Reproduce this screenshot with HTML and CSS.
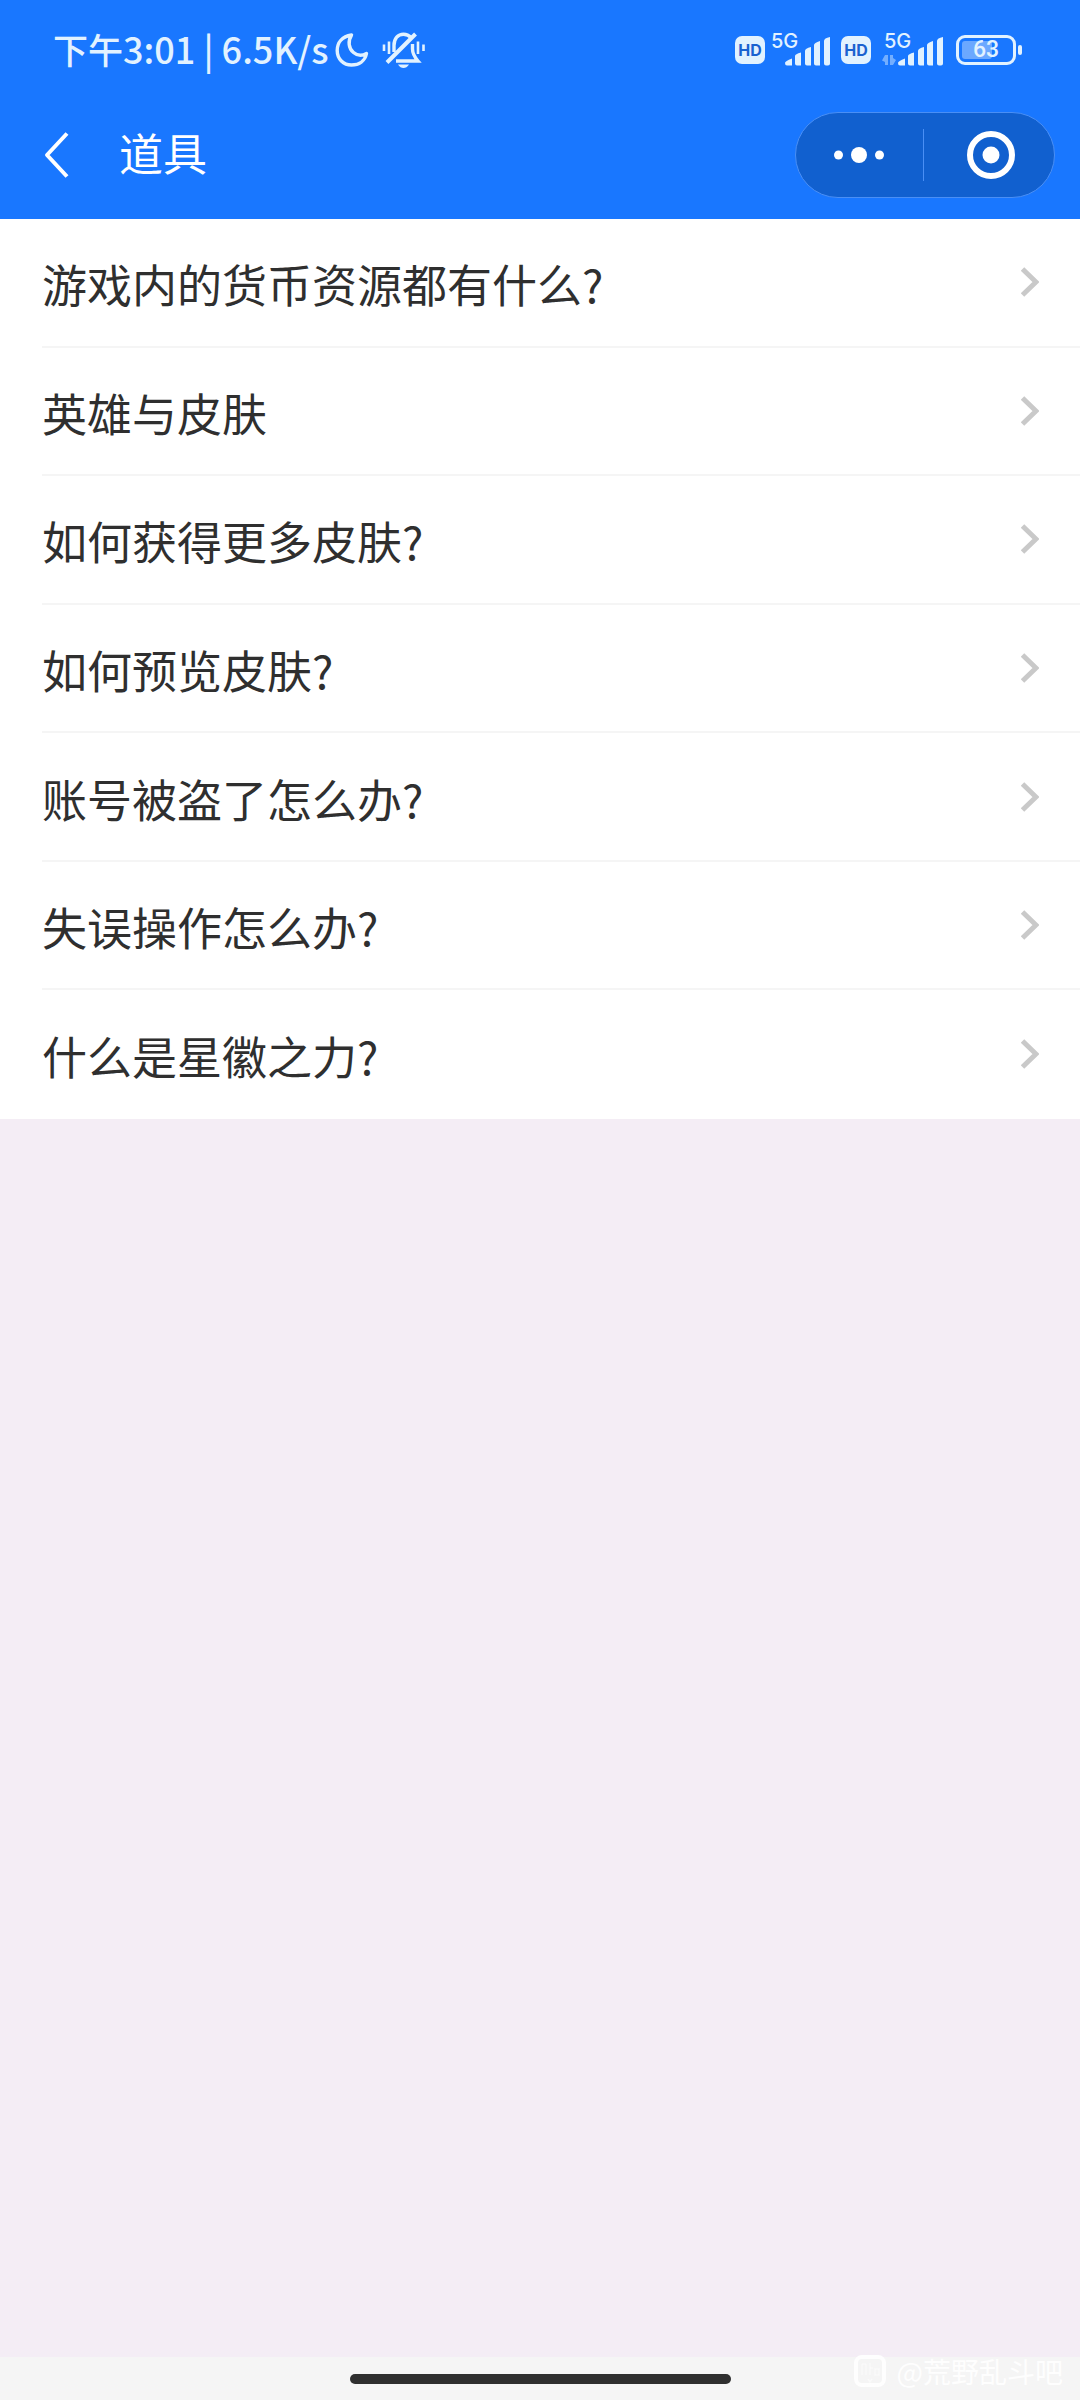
FILE: index.html
```html
<!DOCTYPE html>
<html lang="zh-CN">
<head>
<meta charset="utf-8">
<meta name="viewport" content="width=device-width, initial-scale=1">
<title>道具</title>
<link rel="stylesheet" href="styles.css">
</head>
<body>
<header class="top">
  <div class="status">
    <div class="status-left">
      <span class="clock">下午<span class="latin">3:01 | 6.5K/s</span></span>
      <svg class="moon" width="34" height="36" viewBox="0 0 34 36" fill="none" stroke="currentColor" stroke-width="3.4" stroke-linejoin="round"><path d="M16.5 3C7 4.500 2.200 10.500 2.200 18.500C2.200 27 8.500 33 16.500 33C24 33 30 29 31.500 21.500C27 24 22 23.500 18.500 20.500C13.500 16.500 12.700 9 16.500 3Z"/></svg>
      <svg class="bell" width="44" height="38" viewBox="0 0 44 38" fill="none" stroke="currentColor" stroke-width="3.4"><path d="M12 21V14.500C12 7.500 16 3.200 21.500 3.200C24.500 3.200 27 4.300 29 6.500M30.500 13V18C30.500 23 32.500 26 36 30H14"/><path d="M5 31.500L33.500 3" stroke-width="4"/><path d="M2 13.500V20M7 10.500V23M36 10.500V23M41.500 13.500V20" stroke-width="2.600"/><path d="M16 33.500H27C25.500 36 23.500 37 21.500 37S17.500 36 16 33.500Z" fill="currentColor" stroke="none"/></svg>
    </div>
    <div class="status-right">
      <span class="hd">HD</span>
      <span class="signal"><span class="net">5G</span>
        <svg width="59" height="32" viewBox="0 0 59 32" fill="currentColor"><path d="M14 29Q14 27 21 24.500V31.500H16Q14 31.500 14 29ZM24 22Q24 20 30 18.500V31.500H26Q24 31.500 24 29.500ZM34 17Q34 14.500 40 13V31.500H36Q34 31.500 34 29.500ZM43 11Q43 9 49 7V31.500H45Q43 31.500 43 29.500ZM53 7Q53 4 59 3V29.500Q59 31.500 57 31.500H55Q53 31.500 53 29.500Z"/></svg>
      </span>
      <span class="hd">HD</span>
      <span class="signal signal-data"><span class="net">5G</span>
        <svg width="61" height="32" viewBox="0 0 61 32" fill="currentColor"><path opacity=".45" d="M3 21H6V31H3V28L0 26.500ZM8 21H11V24L14 26L11 31H8Z"/><path d="M16 29Q16 27 23 24.500V31.500H18Q16 31.500 16 29ZM26 22Q26 20 32 18.500V31.500H28Q26 31.500 26 29.500ZM36 17Q36 14.500 42 13V31.500H38Q36 31.500 36 29.500ZM45 11Q45 9 51 7V31.500H47Q45 31.500 45 29.500ZM55 7Q55 4 61 3V29.500Q61 31.500 59 31.500H57Q55 31.500 55 29.500Z"/></svg>
      </span>
      <span class="battery"><span class="battery-body"><span class="battery-level"></span><span class="battery-text">63</span></span><span class="battery-tip"></span></span>
    </div>
  </div>
  <div class="nav">
    <button class="back" type="button" aria-label="返回"><svg width="26" height="46" viewBox="0 0 26 46" fill="none" stroke="currentColor" stroke-width="4" stroke-linejoin="round"><path d="M23 1.500L3 23L23 44.500"/></svg></button>
    <h1 class="title">道具</h1>
    <div class="capsule">
      <button type="button" aria-label="更多"><svg width="50" height="16" viewBox="0 0 50 16" fill="currentColor"><circle cx="4.500" cy="8" r="4.500"/><circle cx="25" cy="8" r="8"/><circle cx="45.500" cy="8" r="4.500"/></svg></button>
      <button class="close" type="button" aria-label="关闭"><svg width="48" height="48" viewBox="0 0 48 48"><circle cx="24" cy="24" r="21" fill="none" stroke="currentColor" stroke-width="6"/><circle cx="24" cy="24" r="8.500" fill="currentColor"/></svg></button>
    </div>
  </div>
</header>
<main class="content">
  <nav class="list">
    <a class="row" href="#"><span>游戏内的货币资源都有什么?</span><svg class="chevron" viewBox="0 0 18 30"><path d="M1.500 2L15 15L1.500 28"/></svg></a>
    <a class="row" href="#"><span>英雄与皮肤</span><svg class="chevron" viewBox="0 0 18 30"><path d="M1.500 2L15 15L1.500 28"/></svg></a>
    <a class="row" href="#"><span>如何获得更多皮肤?</span><svg class="chevron" viewBox="0 0 18 30"><path d="M1.500 2L15 15L1.500 28"/></svg></a>
    <a class="row" href="#"><span>如何预览皮肤?</span><svg class="chevron" viewBox="0 0 18 30"><path d="M1.500 2L15 15L1.500 28"/></svg></a>
    <a class="row" href="#"><span>账号被盗了怎么办?</span><svg class="chevron" viewBox="0 0 18 30"><path d="M1.500 2L15 15L1.500 28"/></svg></a>
    <a class="row" href="#"><span>失误操作怎么办?</span><svg class="chevron" viewBox="0 0 18 30"><path d="M1.500 2L15 15L1.500 28"/></svg></a>
    <a class="row" href="#"><span>什么是星徽之力?</span><svg class="chevron" viewBox="0 0 18 30"><path d="M1.500 2L15 15L1.500 28"/></svg></a>
  </nav>
</main>
<footer class="home">
  <span class="home-bar"></span>
  <span class="watermark"><svg width="32" height="32" viewBox="0 0 32 32" fill="none" stroke="currentColor"><rect x="2" y="2" width="28" height="28" rx="6" stroke-width="4"/><path d="M8 9V20M12 9V20M8 9H12M16 8V20M16 13H19M21 14H25V20H21ZM14 24L16 27L18 24" stroke-width="1.500" opacity=".6"/></svg>@荒野乱斗吧</span>
</footer>
</body>
</html>
```

FILE: styles.css
```css
* { box-sizing: border-box; }

body {
  margin: 0;
  min-height: 100vh;
  display: flex;
  flex-direction: column;
  background: #f4edf5;
  color: #2f2f2f;
  font-family: "Noto Sans CJK SC", sans-serif;
}

button {
  margin: 0;
  padding: 0;
  border: 0;
  background: none;
  color: inherit;
}

svg { display: block; flex: none; }

.top { background: #1977ff; color: #fff; }

.status {
  display: flex;
  justify-content: space-between;
  height: 100px;
  padding: 0 58px 0 53px;
  color: #e2f2ff;
}

.status-left,
.status-right { display: flex; align-items: center; }

.clock {
  padding-bottom: 4px;
  font-size: 35px;
  line-height: 52px;
  font-weight: 500;
  white-space: pre;
}

.latin { font-size: 36px; }

.moon { margin-left: 6px; }
.bell { margin-left: 13px; }

.hd {
  width: 30px;
  height: 28px;
  border-radius: 7px;
  background: #e2f2ff;
  color: #1b62d0;
  font: 700 16px/28px "Inter", sans-serif;
  text-align: center;
}

.signal { position: relative; margin: 0 11px 0 6px; }
.signal-data { margin: 0 13px 0 11px; }

.net {
  position: absolute;
  left: 0;
  top: -5px;
  font: 500 20px/24px "Inter", sans-serif;
}
.signal-data .net { left: 2px; }

.battery { display: flex; align-items: center; gap: 2px; }

.battery-body {
  position: relative;
  width: 60px;
  height: 30px;
  border: 3px solid;
  border-radius: 9px;
}

.battery-level {
  position: absolute;
  left: 3px;
  top: 3px;
  bottom: 3px;
  width: 30px;
  border-radius: 3px;
  background: #6ba8ff;
}

.battery-text {
  position: relative;
  display: block;
  font: 500 23px/24px "Roboto", sans-serif;
  text-align: center;
}

.battery-tip { width: 4px; height: 10px; border-radius: 2px; background: currentColor; }

.nav {
  display: flex;
  align-items: center;
  height: 119px;
  padding: 0 25px 9px 44px;
}

.back { width: 75px; }

.title {
  flex: 1;
  margin: 0;
  padding-bottom: 6px;
  font-size: 44px;
  line-height: 64px;
  font-weight: 400;
}

.capsule {
  display: flex;
  align-items: center;
  width: 260px;
  height: 86px;
  border: 1px solid #4a8ff5;
  border-radius: 43px;
  background: #1160cf;
}

.capsule button {
  flex: 1;
  display: flex;
  align-items: center;
  justify-content: center;
  height: 52px;
}
.capsule .close { padding-left: 4px; border-left: 1px solid #4a8ff5; }

.content { flex: 1; }

.list {
  display: grid;
  grid-auto-rows: 1fr;
  min-height: 900px;
  padding-left: 42px;
  background: #fff;
}

.row {
  display: flex;
  align-items: center;
  justify-content: space-between;
  padding-right: 41px;
  border-bottom: 2px solid #f5f5f5;
  color: inherit;
  font-size: 45px;
  line-height: 64px;
  text-decoration: none;
}
.row:last-child { border-bottom-color: transparent; }
.row span { padding-top: 4px; }

.chevron {
  width: 18px;
  height: 30px;
  fill: none;
  stroke: #c9c9c9;
  stroke-width: 5;
}

.home {
  position: relative;
  display: flex;
  align-items: center;
  justify-content: center;
  height: 43px;
  background: #f5f5f5;
}

.home-bar { width: 381px; height: 10px; border-radius: 5px; background: #2f2f2f; }

.watermark {
  position: absolute;
  right: 17px;
  bottom: 9px;
  display: flex;
  align-items: center;
  gap: 11px;
  color: #fefefe;
  font-size: 28px;
  line-height: 40px;
}
```
